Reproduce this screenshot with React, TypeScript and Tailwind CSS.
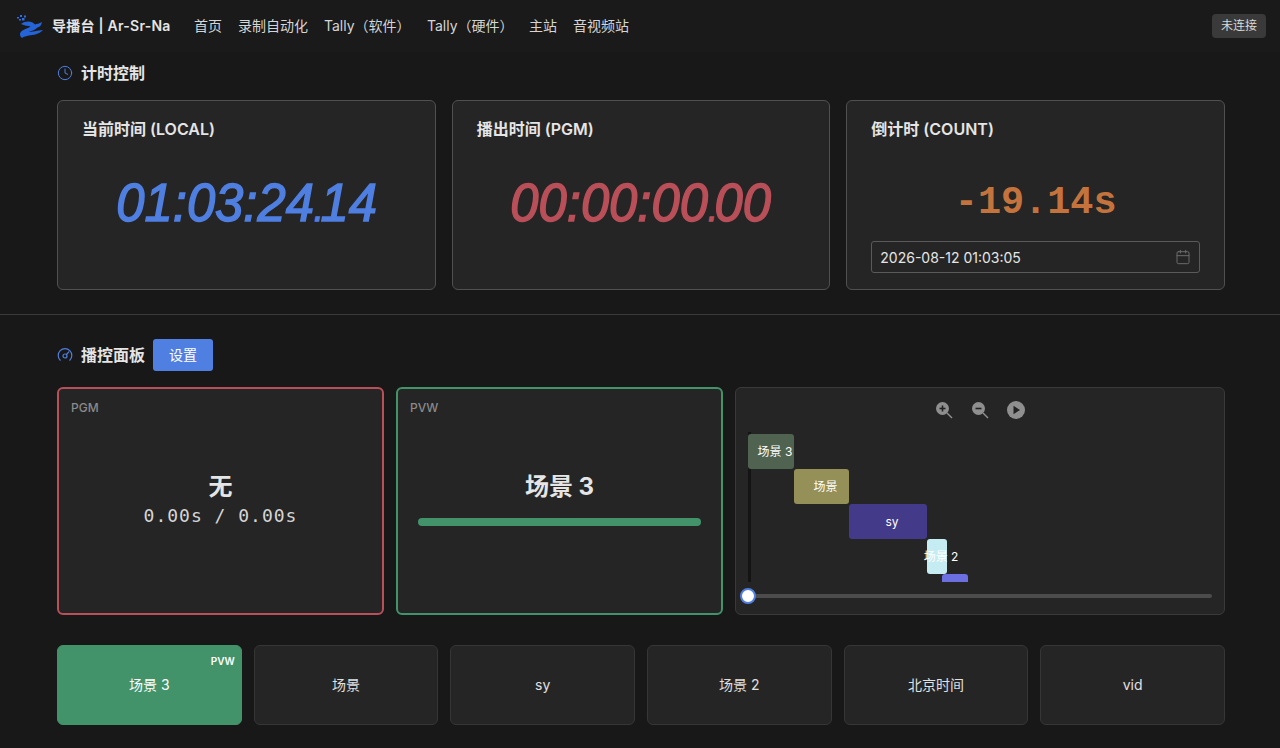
import { Calendar, Clock } from "lucide-react";

const font = "font-['Inter','Noto_Sans_CJK_SC',sans-serif]";

const navItems = [
  { label: "首页", cls: "w-[44px]" },
  { label: "录制自动化", cls: "w-[86px]" },
  { label: "Tally（软件）", cls: "w-[103px]" },
  { label: "Tally（硬件）", cls: "w-[102px]" },
  { label: "主站", cls: "w-[44px]" },
  { label: "音视频站", cls: "w-[72px]" },
];

const scenes = ["场景 3", "场景", "sy", "场景 2", "北京时间", "vid"];

function Logo() {
  return (
    <svg width="30" height="24" viewBox="0 0 30 24" className="shrink-0">
      <path
        d="M6 10 C11 6.5 17 7 20 10.5 C22 10 24 9.5 27 8 C26.5 11.5 24.5 13 22.5 13.5 C20 16.5 16 17 13.5 18 C17 18 22 16.5 28 16 C24 20.5 18 21 14 21.5 C11 22 9 22.5 7 24 C4 21.5 4.5 18.5 7.5 16.5 C10.5 14.5 14 14 15.5 12.5 C13 11.5 9.5 12 6 10 Z"
        fill="#2563d8"
      />
      <rect x="2" y="3" width="2" height="1.5" fill="#2f6de0" />
      <rect x="5" y="1" width="2" height="2" fill="#2f6de0" />
      <rect x="7" y="4" width="2.5" height="2.5" fill="#2f6de0" />
      <rect x="9" y="1.5" width="2" height="2" fill="#2f6de0" />
      <rect x="4" y="5" width="2" height="1.5" fill="#2f6de0" />
    </svg>
  );
}

function GaugeIcon() {
  return (
    <svg width="16" height="16" viewBox="0 0 16 16" fill="none" stroke="#4f7fe0" strokeWidth="1.2" className="shrink-0">
      <path d="M3.2 13.2 A6.8 6.8 0 1 1 12.8 13.2" strokeLinecap="round" />
      <circle cx="8" cy="9" r="2" />
      <path d="M9.5 7.5 L11.8 4.8" strokeLinecap="round" />
    </svg>
  );
}

function ZoomIcon({ plus }: { plus: boolean }) {
  return (
    <svg width="18" height="18" viewBox="0 0 18 18" className="shrink-0">
      <circle cx="7.5" cy="7.5" r="6.5" fill="#8f8f8f" />
      <path d="M12 12 L17 17" stroke="#8f8f8f" strokeWidth="1.4" />
      <path d="M4.5 7.5 H10.5" stroke="#222" strokeWidth="1.6" />
      {plus && <path d="M7.5 4.5 V10.5" stroke="#222" strokeWidth="1.6" />}
    </svg>
  );
}

function PlayIcon() {
  return (
    <svg width="18" height="18" viewBox="0 0 18 18" className="shrink-0">
      <circle cx="9" cy="9" r="9" fill="#8f8f8f" />
      <path d="M6.5 4.8 L13 9 L6.5 13.2 Z" fill="#222" />
    </svg>
  );
}

function Clockface({ time, frac, color }: { time: string; frac: string; color: string }) {
  return (
    <div
      className={`mt-[30px] flex h-[66px] items-center justify-center whitespace-nowrap font-['Liberation_Sans',sans-serif] text-[54px] italic leading-none [-webkit-text-stroke:1.5px_currentColor] ${color}`}
    >
      <span className="inline-block origin-center scale-x-[0.94]">
        {time}
        <span className="text-[36px] tracking-[-3px]">.</span>
        {frac}
      </span>
    </div>
  );
}

function TimeCard({ title, children }: { title: string; children: React.ReactNode }) {
  return (
    <div className="h-[190px] rounded-md border border-[#505050] bg-[#252525] px-6 pt-[18px]">
      <div className="text-[16px] font-semibold leading-[20px] text-[#e5e5e5]">{title}</div>
      {children}
    </div>
  );
}

export default function App() {
  return (
    <div className={`${font} h-[748px] w-[1280px] overflow-hidden bg-[#181818] text-[#e5e5e5]`}>
      <header className="flex h-[52px] items-center bg-[#1a1a1a] pl-[15px] pr-[14px]">
        <Logo />
        <span className="-mt-[2px] ml-[7px] w-[142px] text-[14px] font-semibold tracking-[0.25px] text-[#e5e5e5]">
          导播台 | Ar-Sr-Na
        </span>
        <nav className="-mt-[2px] flex items-center text-[14px] text-[#d5d5d5]">
          {navItems.map((n) => (
            <span key={n.label} className={`${n.cls} block whitespace-nowrap`}>
              {n.label}
            </span>
          ))}
        </nav>
        <span className="ml-auto flex h-6 w-[54px] items-center justify-center rounded bg-[#3a3a3a] text-[12px] text-[#d9d9d9]">
          未连接
        </span>
      </header>

      <section className="pl-[57px] pr-[55px]">
        <div className="flex h-[48px] items-center gap-2 pb-[6px]">
          <Clock size={16} color="#4f7fe0" strokeWidth={1.5} />
          <h2 className="text-[16px] font-semibold">计时控制</h2>
        </div>
        <div className="grid grid-cols-3 gap-4">
          <TimeCard title="当前时间 (LOCAL)">
            <Clockface time="01:03:24" frac="14" color="text-[#4f7fe0]" />
          </TimeCard>
          <TimeCard title="播出时间 (PGM)">
            <Clockface time="00:00:00" frac="00" color="text-[#b94f58]" />
          </TimeCard>
          <TimeCard title="倒计时 (COUNT)">
            <div className="mt-[31px] text-center font-['Liberation_Mono',monospace] text-[38.5px] font-bold leading-[66px] text-[#c4733d]">
              -19.14s
            </div>
            <div className="mt-[5px] flex h-8 items-center justify-between rounded-[3px] border border-[#5a5a5a] pl-[8px] pr-[8px] text-[14px] text-[#e5e5e5]">
              <span>2026-08-12 01:03:05</span>
              <Calendar size={16} color="#6b6b6b" strokeWidth={1.5} />
            </div>
          </TimeCard>
        </div>
      </section>

      <div className="mt-6 h-px bg-[#3a3a3a]" />

      <section className="pl-[57px] pr-[55px]">
        <div className="mt-6 flex h-8 items-center">
          <GaugeIcon />
          <h2 className="ml-2 text-[16px] font-semibold">播控面板</h2>
          <button className="ml-2 h-8 w-[60px] rounded-[3px] bg-[#4f7fe0] pb-[2px] text-[14px] text-white">设置</button>
        </div>

        <div className="mt-4 grid h-[228px] grid-cols-[327px_327px_490px] gap-3">
          <div className="flex flex-col rounded-md border-2 border-[#b94f58] bg-[#252525] px-3 pt-[10px]">
            <div className="text-[12px] font-medium leading-[18px] text-[#8a8a8a]">PGM</div>
            <div className="mt-[52px] text-center text-[24px] font-bold leading-[36px]">无</div>
            <div className="text-center font-['DejaVu_Sans_Mono',monospace] text-[18px] leading-[22px] tracking-[1px] text-[#d5d5d5]">
              0.00s / 0.00s
            </div>
          </div>
          <div className="flex flex-col rounded-md border-2 border-[#42936a] bg-[#252525] px-5 pt-[10px]">
            <div className="-ml-2 text-[12px] font-medium leading-[18px] text-[#8a8a8a]">PVW</div>
            <div className="mt-[52px] text-center text-[24px] font-bold leading-[36px]">场景 3</div>
            <div className="mt-[13px] h-2 rounded-full bg-[#42936a]" />
          </div>
          <div className="rounded-md border border-[#3a3a3a] bg-[#252525]">
            <div className="mt-[13px] flex h-[18px] items-center justify-center gap-[18px] pr-[1px]">
              <ZoomIcon plus />
              <ZoomIcon plus={false} />
              <PlayIcon />
            </div>
            {/* timeline canvas: blocks sit at their time offsets */}
            <div className="relative mx-3 mt-[13px] h-[150px] overflow-hidden text-[12px] text-white">
              <div className="absolute left-0 top-0 h-full w-[3px] bg-[#141414]" />
              <div className="absolute left-0 top-[2px] flex h-[35px] w-[46px] items-center justify-center whitespace-nowrap rounded-[3px] bg-[#4f6350] pl-[8px]">
                场景 3
              </div>
              <div className="absolute left-[46px] top-[37px] flex h-[35px] w-[55px] items-center justify-center rounded-[3px] bg-[#958f58] pl-[8px]">
                场景
              </div>
              <div className="absolute left-[101px] top-[72px] flex h-[35px] w-[78px] items-center justify-center rounded-[3px] bg-[#433a8a] pl-[8px]">
                sy
              </div>
              <div className="absolute left-[179px] top-[107px] flex h-[35px] w-[20px] items-center justify-center whitespace-nowrap rounded-[3px] bg-[#c5ecf2] pl-[8px]">
                场景 2
              </div>
              <div className="absolute left-[194px] top-[142px] h-[35px] w-[26px] rounded-[3px] bg-[#6b6fe0]" />
            </div>
            <div className="relative mx-3 mt-[12px] h-1 rounded-full bg-[#4c4c4c]">
              <div className="absolute -left-2 -top-[6px] h-4 w-4 rounded-full border-2 border-[#4f7fe0] bg-white" />
            </div>
          </div>
        </div>

        <div className="mt-[30px] grid grid-cols-6 gap-3">
          {scenes.map((s, i) => (
            <div
              key={s}
              className={`relative flex h-20 items-center justify-center rounded-md border pb-[2px] text-[14px] ${
                i === 0 ? "border-[#42936a] bg-[#42936a] text-white" : "border-[#363636] bg-[#252525] text-[#e0e0e0]"
              }`}
            >
              {s}
              {i === 0 && (
                <span className="absolute right-[6px] top-[9px] text-[10px] font-semibold leading-[12px] text-white">PVW</span>
              )}
            </div>
          ))}
        </div>
      </section>
    </div>
  );
}
